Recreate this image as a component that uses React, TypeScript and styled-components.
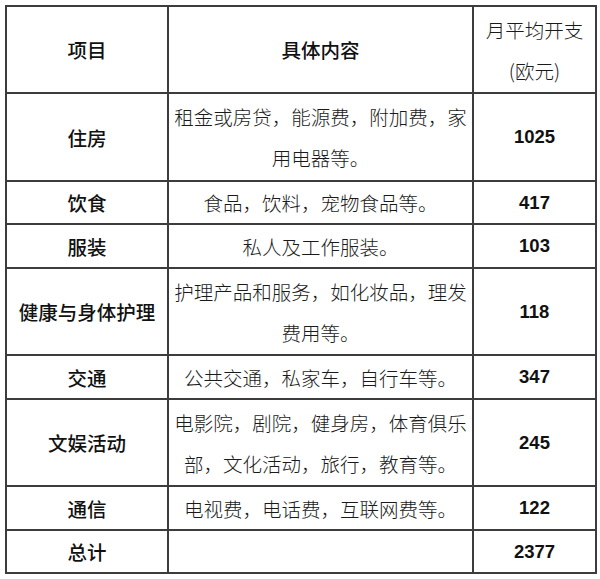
import React from "react";
import styled, { createGlobalStyle } from "styled-components";

const GlobalStyle = createGlobalStyle`
  html, body {
    margin: 0;
    padding: 0;
    background: #ffffff;
  }
  body {
    font-family: "Noto Sans CJK SC", "Liberation Sans", sans-serif;
    color: #111;
  }
`;

const Page = styled.div`
  padding: 5px 0 0 5px;
  width: 600px;
  height: 579px;
  box-sizing: border-box;
  background: #fff;
`;

const Grid = styled.div`
  display: grid;
  grid-template-columns: 162px 305px 123px;
  grid-template-rows: 87px 88px 43px 44px 87px 44px 87px 44px 43px;
  width: 592px;
  box-sizing: border-box;
  border-left: 2px solid #3c3c3c;
  border-top: 2px solid #3c3c3c;
`;

const Cell = styled.div<{ $kind: "label" | "content" | "num" }>`
  box-sizing: border-box;
  border-right: 2px solid #3c3c3c;
  border-bottom: 2px solid #3c3c3c;
  display: flex;
  flex-direction: column;
  align-items: center;
  justify-content: center;
  text-align: center;
  line-height: 41px;
  white-space: nowrap;
  font-family: ${(p) =>
    p.$kind === "num"
      ? '"Liberation Sans", Arial, sans-serif'
      : '"Noto Sans CJK SC", sans-serif'};
  font-size: ${(p) => (p.$kind === "num" ? "18.5px" : "19.5px")};
  font-weight: ${(p) =>
    p.$kind === "num" ? 700 : p.$kind === "label" ? 500 : 300};
  color: ${(p) => (p.$kind === "content" ? "#1a1a1a" : "#111")};
  padding-bottom: ${(p) => (p.$kind === "num" ? "1px" : "0")};
`;

const Line = styled.span`
  display: block;
`;

type Row = { label: string; content: string[]; value: string };

const rows: Row[] = [
  { label: "住房", content: ["租金或房贷，能源费，附加费，家", "用电器等。"], value: "1025" },
  { label: "饮食", content: ["食品，饮料，宠物食品等。"], value: "417" },
  { label: "服装", content: ["私人及工作服装。"], value: "103" },
  { label: "健康与身体护理", content: ["护理产品和服务，如化妆品，理发", "费用等。"], value: "118" },
  { label: "交通", content: ["公共交通，私家车，自行车等。"], value: "347" },
  { label: "文娱活动", content: ["电影院，剧院，健身房，体育俱乐", "部，文化活动，旅行，教育等。"], value: "245" },
  { label: "通信", content: ["电视费，电话费，互联网费等。"], value: "122" },
  { label: "总计", content: [], value: "2377" },
];

export default function App() {
  return (
    <>
      <GlobalStyle />
      <Page>
        <Grid>
          <Cell $kind="label">项目</Cell>
          <Cell $kind="label">具体内容</Cell>
          <Cell $kind="content">
            <Line>月平均开支</Line>
            <Line>(欧元)</Line>
          </Cell>
          {rows.map((r) => (
            <React.Fragment key={r.label}>
              <Cell $kind="label">{r.label}</Cell>
              <Cell $kind="content">
                {r.content.map((l) => (
                  <Line key={l}>{l}</Line>
                ))}
              </Cell>
              <Cell $kind="num">{r.value}</Cell>
            </React.Fragment>
          ))}
        </Grid>
      </Page>
    </>
  );
}
